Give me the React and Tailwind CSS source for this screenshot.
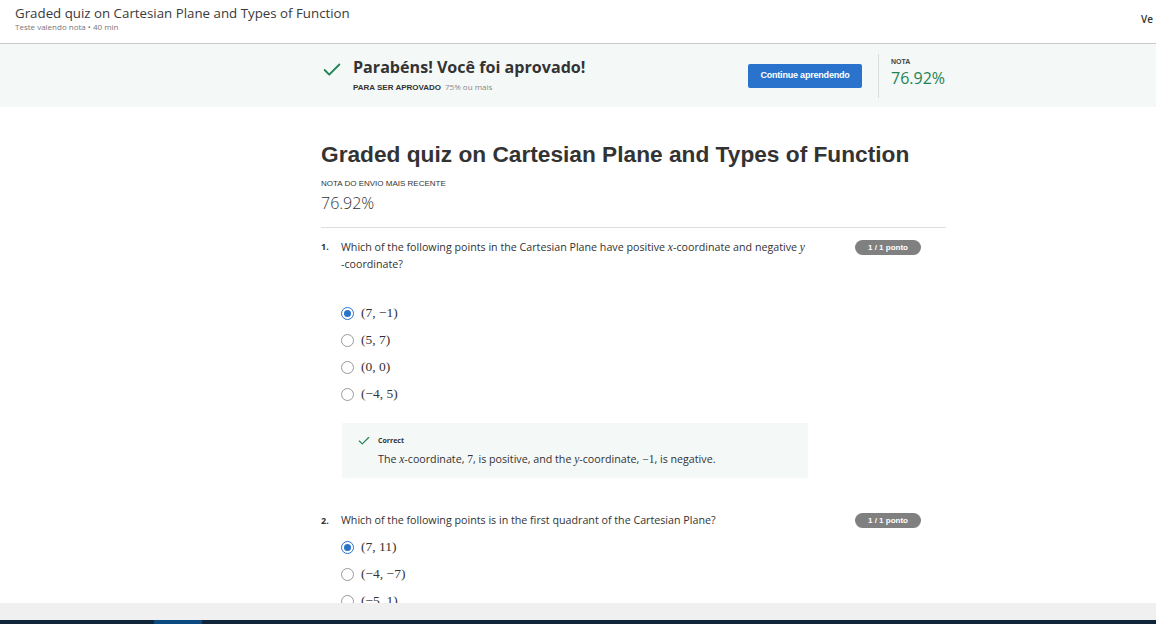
import { Check } from 'lucide-react'

const SANS = { fontFamily: '"Open Sans", "Liberation Sans", sans-serif' }
const ARIAL = { fontFamily: '"Liberation Sans", Arial, sans-serif' }
const MATH = { fontFamily: '"Liberation Serif", "DejaVu Serif", serif' }

const Var = ({ children }) => <span className="italic text-[11.5px]" style={MATH}>{children}</span>
const M = ({ children }) => <span className="text-[11.5px]" style={MATH}>{children}</span>

function Radio({ checked }) {
  return checked ? (
    <span className="size-[13px] rounded-full border-[1.5px] border-[#2a73cc] flex items-center justify-center shrink-0">
      <span className="size-[7px] rounded-full bg-[#2a73cc]" />
    </span>
  ) : (
    <span className="size-[13px] rounded-full border border-[#9a9a9a] shrink-0" />
  )
}

function Option({ checked, children }) {
  return (
    <div className="flex items-center gap-[7px] h-[27px]">
      <Radio checked={checked} />
      <span className="text-[13.5px] text-[#333]" style={MATH}>{children}</span>
    </div>
  )
}

function Badge() {
  return (
    <span className="h-[15px] w-[66px] rounded-full bg-[#808080] text-white text-[8px] font-bold flex items-center justify-center shrink-0" style={ARIAL}>
      1 / 1 ponto
    </span>
  )
}

export default function App() {
  return (
    <div className="w-[1156px] h-[624px] overflow-hidden bg-white flex flex-col" style={SANS}>
      <header className="h-[44px] shrink-0 border-b border-[#c8c8c8] flex items-start justify-between pl-[15px] pr-[3px] pt-[5px]">
        <div>
          <div className="text-[13.3px] leading-[17px] text-[#3a3a3a]">Graded quiz on Cartesian Plane and Types of Function</div>
          <div className="text-[8px] leading-[10px] text-[#777]">Teste valendo nota • 40 min</div>
        </div>
        <div className="text-[10px] font-semibold text-[#333] pt-[7px]">Ve</div>
      </header>

      <section className="h-[63px] shrink-0 bg-[#f4f8f7] flex items-center">
        <div className="ml-[321px] w-[625px] flex items-center">
          <Check className="size-[22px] text-[#1f8354] mt-[-12px]" strokeWidth={2} />
          <div className="ml-[10px] flex-1 -mt-[3px]">
            <div className="text-[16.1px] font-bold text-[#333] leading-[22px]">Parabéns! Você foi aprovado!</div>
            <div className="mt-[4px] text-[8px] leading-[10px]">
              <span className="font-bold text-[#333]" style={ARIAL}>PARA SER APROVADO</span>
              <span className="ml-[4px] text-[#888]">75% ou mais</span>
            </div>
          </div>
          <button className="h-[24px] w-[114px] bg-[#2a73cc] text-white text-[9px] font-bold rounded-[2px] tracking-[-0.2px]" style={ARIAL}>
            Continue aprendendo
          </button>
          <div className="ml-[16px] w-px h-[44px] bg-[#dcdcdc]" />
          <div className="ml-[12px] w-[55px] -mt-[6px]">
            <div className="text-[7px] font-bold text-[#444]" style={ARIAL}>NOTA</div>
            <div className="text-[16px] text-[#1f8354] leading-[20px]">76.92%</div>
          </div>
        </div>
      </section>

      <main className="flex-1 overflow-hidden">
        <div className="ml-[321px] w-[625px]">
          <h1 className="mt-[33px] text-[22.7px] font-bold text-[#333] leading-[28px]" style={ARIAL}>Graded quiz on Cartesian Plane and Types of Function</h1>
          <div className="mt-[10px] text-[8px] text-[#333]" style={ARIAL}>NOTA DO ENVIO MAIS RECENTE</div>
          <div className="mt-[3px] text-[16px] text-[#333] font-light leading-[20px]">76.92%</div>
          <div className="mt-[14px] h-px bg-[#dedede]" />

          <div className="mt-[11px] flex items-start">
            <span className="w-[20px] text-[9px] font-bold text-[#333] pt-[1px]">1.</span>
            <div className="flex-1 text-[10.7px] leading-[17px] text-[#333]">
              Which of the following points in the Cartesian Plane have positive <Var>x</Var>-coordinate and negative <Var>y</Var>
              <br />-coordinate?
            </div>
            <div className="ml-[30px] mr-[25px] mt-[1px]"><Badge /></div>
          </div>

          <div className="mt-[27px] ml-[20px]">
            <Option checked>(7, −1)</Option>
            <Option>(5, 7)</Option>
            <Option>(0, 0)</Option>
            <Option>(−4, 5)</Option>
          </div>

          <div className="mt-[15px] ml-[21px] w-[466px] h-[55px] bg-[#f4f8f7] flex items-start pt-[11px] pl-[15px]">
            <Check className="size-[14px] text-[#1f8354]" strokeWidth={2} />
            <div className="ml-[7px]">
              <div className="text-[7px] font-bold text-[#333] leading-[12px] mt-[1px]">Correct</div>
              <div className="mt-[5px] text-[10.7px] text-[#333] leading-[14px]">
                The <Var>x</Var>-coordinate, <M>7</M>, is positive, and the <Var>y</Var>-coordinate, <M>−1</M>, is negative.
              </div>
            </div>
          </div>

          <div className="mt-[34px] flex items-center">
            <span className="w-[20px] text-[9px] font-bold text-[#333]">2.</span>
            <div className="flex-1 text-[10.7px] leading-[17px] text-[#333]">
              Which of the following points is in the first quadrant of the Cartesian Plane?
            </div>
            <div className="ml-[30px] mr-[25px]"><Badge /></div>
          </div>

          <div className="mt-[5px] ml-[20px]">
            <Option checked>(7, 11)</Option>
            <Option>(−4, −7)</Option>
            <Option>(−5, 1)</Option>
          </div>
        </div>
      </main>

      <div className="h-[17px] shrink-0 bg-[#f0f0f0]" />
      <div className="h-[4px] shrink-0 bg-[#10253a] flex">
        <div className="ml-[154px] w-[48px] bg-[#0b4a80]" />
      </div>
    </div>
  )
}
